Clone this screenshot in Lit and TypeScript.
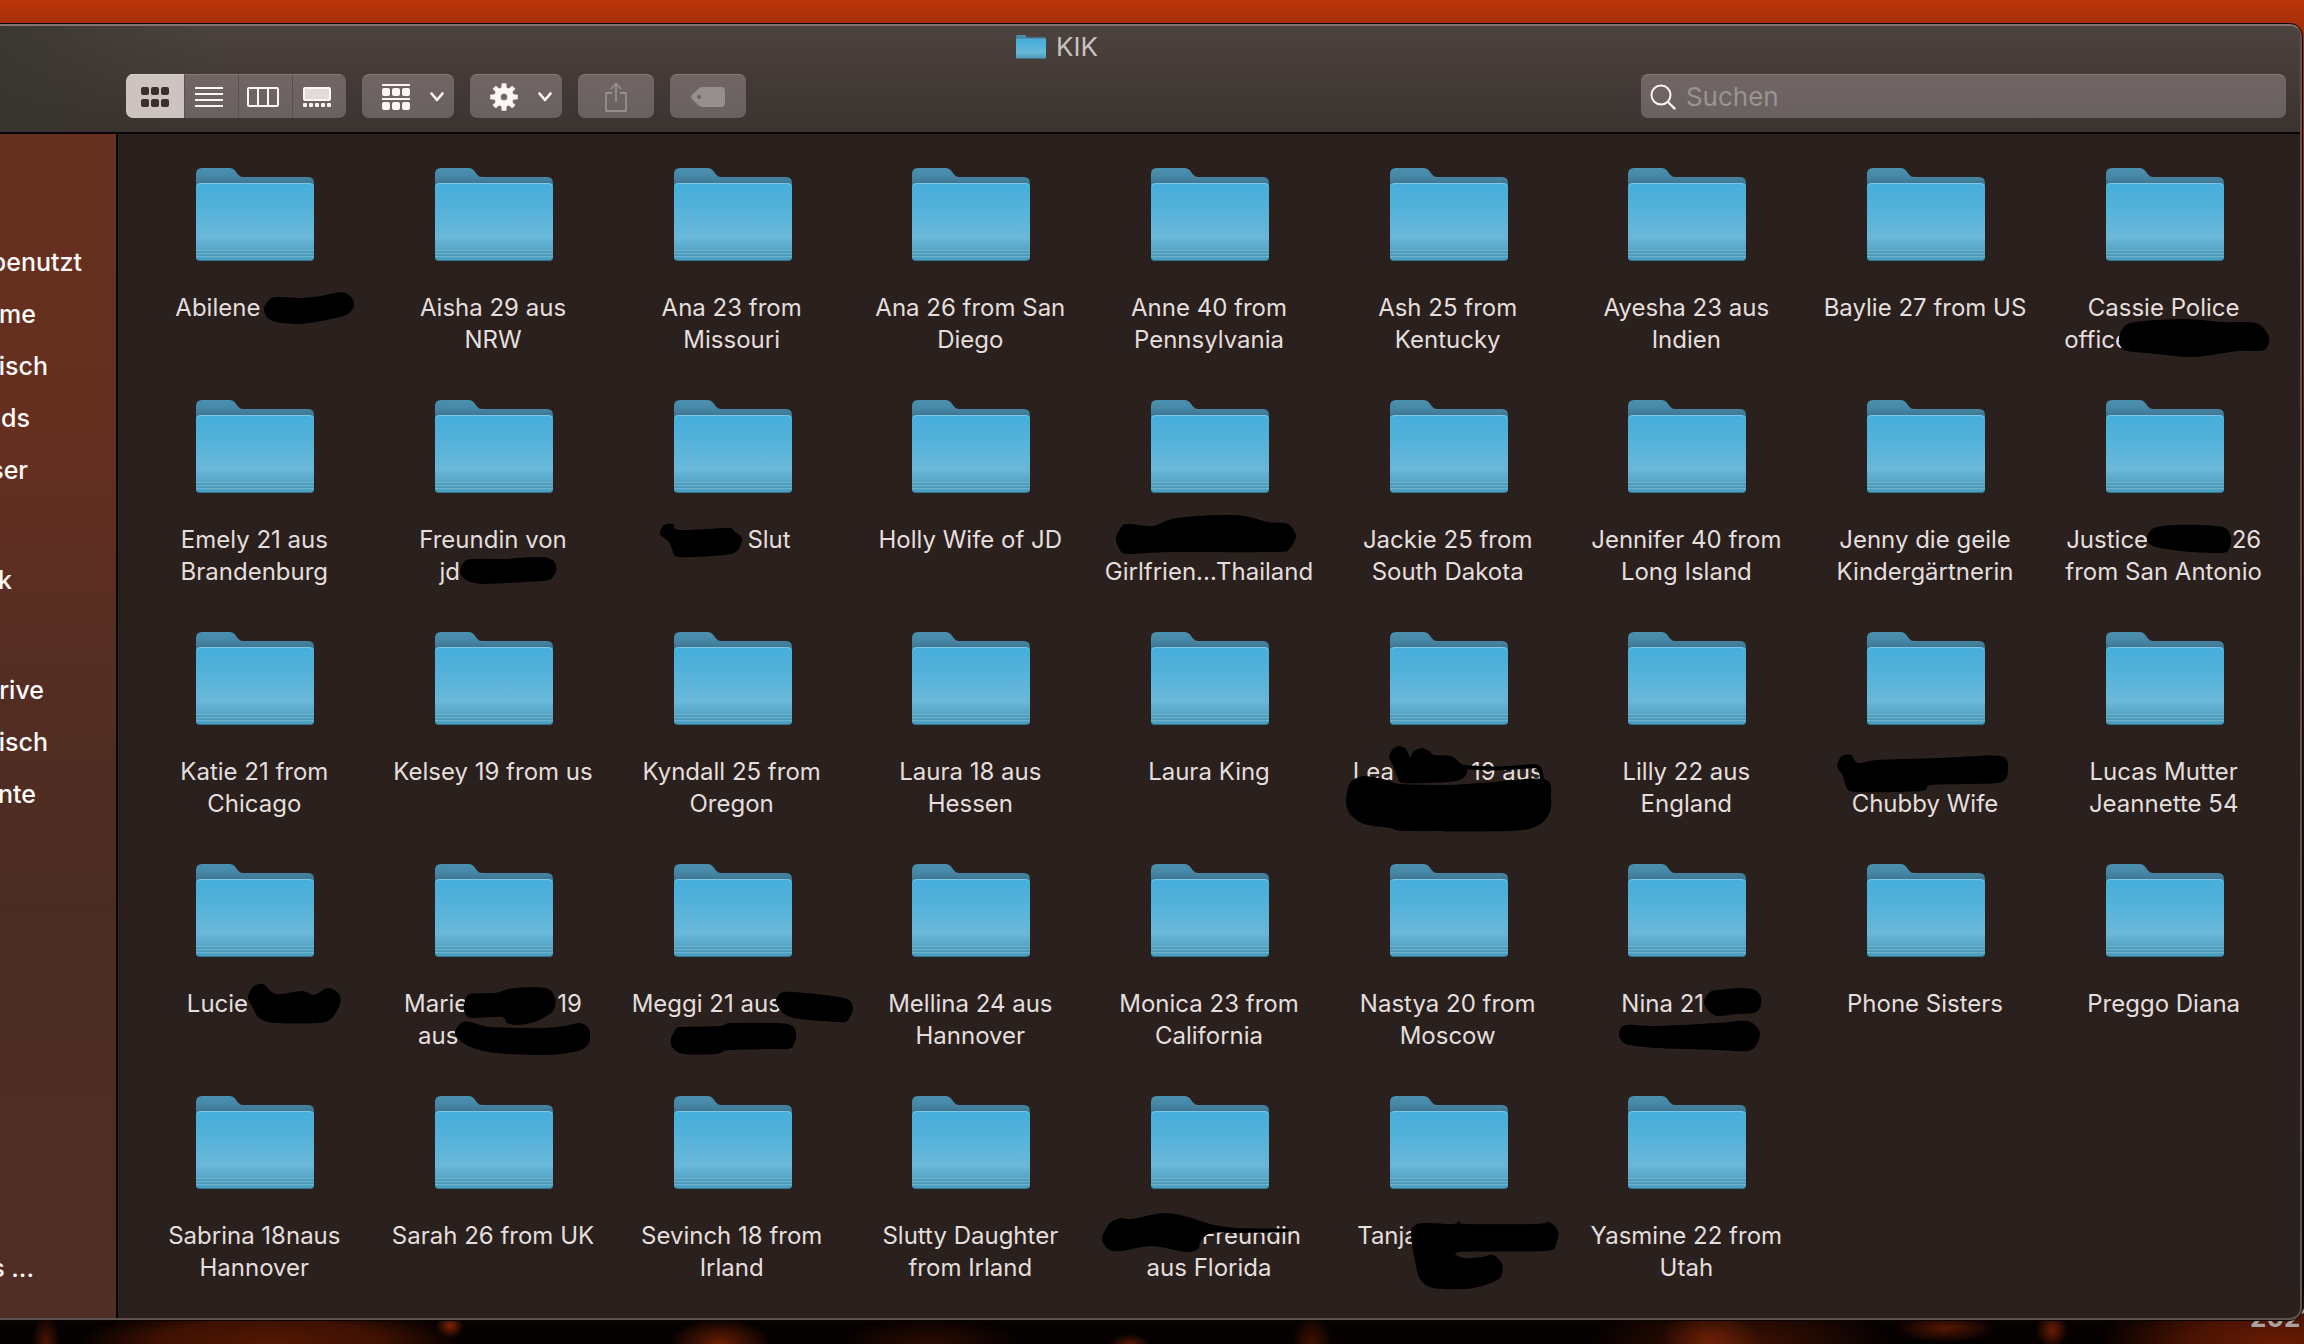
import { LitElement, html, svg, css, nothing } from "lit";
import { customElement, property } from "lit/decorators.js";

type Point = [number, number];
/** A plain line is a string; a line with covered words keeps its full width and pins the readable parts to its ends. */
type Line = string | { width: number; parts: string[] };
interface Folder {
  lines: Line[];
  marks?: string[];
  pen?: string;
}

const hidden: Line = { width: 0, parts: [] };
const covered = (width: number, ...parts: string[]): Line => ({ width, parts });

const folders: Folder[] = [
  {
    lines: [covered(158, "Abilene")],
    marks: ["129,16 135,7 143,5 166,6 186,4 206,0 216,5 219,14 211,23 186,29 163,32 141,30 132,25"],
  },
  { lines: ["Aisha 29 aus", "NRW"] },
  { lines: ["Ana 23 from", "Missouri"] },
  { lines: ["Ana 26 from San", "Diego"] },
  { lines: ["Anne 40 from", "Pennsylvania"] },
  { lines: ["Ash 25 from", "Kentucky"] },
  { lines: ["Ayesha 23 aus", "Indien"] },
  { lines: ["Baylie 27 from US"] },
  {
    lines: ["Cassie Police", covered(199, "office")],
    marks: ["74,46 81,33 99,29 140,27 176,30 211,31 224,45 219,58 193,59 148,65 103,61 79,58"],
  },
  { lines: ["Emely 21 aus", "Brandenburg"] },
  {
    lines: ["Freundin von", covered(107, "jd")],
    marks: ["86,46 90,38 98,35 130,35 160,33 174,34 181,39 182,47 177,55 168,57 150,58 110,60 94,57 88,52"],
  },
  {
    lines: [covered(118, "", "Slut")],
    marks: ["47,10 51,1 60,0 66,6 114,4 121,7 129,15 124,27 111,31 66,33 59,25 56,18"],
  },
  { lines: ["Holly Wife of JD"] },
  {
    lines: [hidden, "Girlfrien...Thailand"],
    marks: ["26,14 32,2 40,0 63,2 86,-6 129,-9 155,-8 178,-2 198,0 206,12 199,25 185,28 78,28 37,30 29,24"],
  },
  { lines: ["Jackie 25 from", "South Dakota"] },
  { lines: ["Jennifer 40 from", "Long Island"] },
  { lines: ["Jenny die geile", "Kindergärtnerin"] },
  {
    lines: [covered(195, "Justice", "26"), "from San Antonio"],
    marks: ["102,14 109,4 130,1 157,1 180,4 186,15 183,27 171,29 135,27 108,22"],
  },
  { lines: ["Katie 21 from", "Chicago"] },
  { lines: ["Kelsey 19 from us"] },
  { lines: ["Kyndall 25 from", "Oregon"] },
  { lines: ["Laura 18 aus", "Hessen"] },
  { lines: ["Laura King"] },
  {
    lines: [covered(190, "Lea", "19 aus"), hidden],
    marks: [
      "17,45 21,27 35,20 58,24 71,28 118,29 151,27 215,23 222,42 220,58 208,70 181,75 78,75 61,72 35,68 21,58",
      "60,1 64,-7 70,-10 77,-7 81,1 85,-5 93,-8 100,-5 105,-1 121,0 130,6 138,15 133,23 118,26 75,27 68,20 64,9",
    ],
    pen: "M126 10C148 13 178 13 204 10Q211 10 212 16L214 30",
  },
  { lines: ["Lilly 22 aus", "England"] },
  {
    lines: [hidden, "Chubby Wife"],
    marks: ["31,10 36,0 45,-1 52,7 72,4 135,2 194,0 202,12 196,26 162,28 124,29 115,35 50,36 40,30 37,20"],
  },
  { lines: ["Lucas Mutter", "Jeannette 54"] },
  {
    lines: [covered(135, "Lucie")],
    marks: ["113,10 118,-1 128,-4 141,6 167,3 179,7 193,0 204,6 205,16 197,30 184,35 140,35 124,30 118,20"],
  },
  {
    lines: [covered(178, "Marie", "19"), covered(150, "aus")],
    marks: [
      "90,16 96,6 121,5 140,0 172,0 181,10 179,23 163,33 144,37 133,35 128,29 98,30 91,25",
      "81,46 87,35 96,34 117,39 167,40 190,38 206,35 215,41 215,55 204,63 172,67 121,65 94,58",
    ],
  },
  {
    lines: [covered(200, "Meggi 21 aus"), hidden],
    marks: [
      "163,13 168,5 181,4 231,10 240,20 234,33 222,34 181,30 168,23",
      "58,51 64,40 71,39 107,38 119,35 174,36 183,46 178,60 158,61 116,62 103,66 71,66 60,60",
    ],
  },
  { lines: ["Mellina 24 aus", "Hannover"] },
  { lines: ["Monica 23 from", "California"] },
  { lines: ["Nastya 20 from", "Moscow"] },
  {
    lines: [covered(130, "Nina 21"), hidden],
    marks: [
      "137,14 142,5 150,2 175,0 188,2 194,9 193,20 186,25 170,26 150,28 141,22",
      "52,46 59,37 90,38 150,35 180,33 192,42 191,54 181,63 150,62 90,60 59,56",
    ],
  },
  { lines: ["Phone Sisters"] },
  { lines: ["Preggo Diana"] },
  { lines: ["Sabrina 18naus", "Hannover"] },
  { lines: ["Sarah 26 from UK"] },
  { lines: ["Sevinch 18 from", "Irland"] },
  { lines: ["Slutty Daughter", "from Irland"] },
  {
    lines: [covered(184, "", "Freundin"), "aus Florida"],
    marks: [
      "12,18 20,3 31,-2 42,-1 74,-7 98,-3 120,4 147,8 196,9 196,12 147,13 121,13 111,21 108,29 96,32 62,26 31,31 18,29",
    ],
  },
  {
    lines: [covered(181, "Tanja"), hidden],
    marks: [
      "82,14 86,5 99,3 124,4 131,1 137,4 207,4 220,2 229,11 227,24 216,31 131,32 135,38 153,37 164,35 173,44 171,58 153,66 135,69 104,68 91,59 86,41",
    ],
  },
  { lines: ["Yasmine 22 from", "Utah"] },
];

/** Sidebar entries; `end` is where the label stops, measured from the visible left edge. */
const sidebarGroups: { label: string; end: number }[][] = [
  [
    { label: "benutzt", end: 82 },
    { label: "me", end: 36 },
    { label: "isch", end: 48 },
    { label: "ds", end: 30 },
    { label: "ser", end: 28 },
  ],
  [{ label: "k", end: 12 }],
  [
    { label: "rive", end: 44 },
    { label: "isch", end: 48 },
    { label: "nte", end: 36 },
  ],
];

/** Closed smooth curve through a list of points. */
function smooth(list: string): string {
  const p = list.split(" ").map((s) => s.split(",").map(Number) as Point);
  const n = p.length;
  let d = `M${p[0][0]} ${p[0][1]}`;
  for (let i = 0; i < n; i++) {
    const a = p[(i + n - 1) % n];
    const b = p[i];
    const c = p[(i + 1) % n];
    const e = p[(i + 2) % n];
    const r = (v: number) => Math.round(v * 10) / 10;
    d += `C${r(b[0] + (c[0] - a[0]) / 7)} ${r(b[1] + (c[1] - a[1]) / 7)} ${r(c[0] - (e[0] - b[0]) / 7)} ${r(
      c[1] - (e[1] - b[1]) / 7,
    )} ${c[0]} ${c[1]}`;
  }
  return d + "Z";
}

const tiles = (y: number) =>
  [0, 10, 20].map((x) => svg`<rect x=${x} y=${y} width="8" height="8" rx="2" />`);

const chevron = html`<svg width="14" height="10" viewBox="0 0 14 10" aria-hidden="true">
  <path d="M1.5 1.5 7 8l5.500-6.500" fill="none" stroke="#fdf6f4" stroke-width="2.600" stroke-linecap="round" stroke-linejoin="round" />
</svg>`;

function gearPath(): string {
  const teeth = 8;
  const pts: string[] = [];
  for (let i = 0; i < teeth; i++) {
    const mid = (i * 2 * Math.PI) / teeth - Math.PI / 2;
    for (const [r, off] of [
      [9.6, -0.25],
      [13.8, -0.15],
      [13.8, 0.15],
      [9.6, 0.25],
    ]) {
      pts.push(`${(14 + r * Math.cos(mid + off)).toFixed(1)} ${(14 + r * Math.sin(mid + off)).toFixed(1)}`);
    }
  }
  return `M${pts.join("L")}ZM14 10.500a3.500 3.500 0 1 0 0 7a3.500 3.500 0 1 0 0-7Z`;
}

@customElement("folder-icon")
export class FolderIcon extends LitElement {
  static styles = css`
    :host {
      display: block;
    }
    .shape {
      display: block;
      width: 100%;
      height: auto;
    }
  `;
  render() {
    return html`<svg class="shape" viewBox="0 0 118 93" aria-hidden="true">
      <defs>
        <linearGradient id="back" x1="0" y1="0" x2="0" y2="1">
          <stop offset="0" stop-color="#4a90b0" />
          <stop offset="0.14" stop-color="#4688a6" />
          <stop offset="0.26" stop-color="#3f7590" />
        </linearGradient>
        <linearGradient id="front" x1="0" y1="0" x2="0" y2="1">
          <stop offset="0" stop-color="#45aedb" />
          <stop offset="0.35" stop-color="#55b2da" />
          <stop offset="0.7" stop-color="#69b8d8" />
          <stop offset="0.87" stop-color="#57a3c3" />
          <stop offset="1" stop-color="#4aa0c0" />
        </linearGradient>
      </defs>
      <path d="M0 6Q0 0 6 0H34Q37 0 39 2.500L42 6.500Q44 9 47 9H112Q118 9 118 15V60H0Z" fill="url(#back)" />
      <path d="M0 19Q0 15 4 15H114Q118 15 118 19V89Q118 92.500 115 92.500H3Q0 92.500 0 89Z" fill="url(#front)" />
      <path d="M1 18Q2 15.500 5 15.500H113Q116 15.500 117 18" fill="none" stroke="#7cc8e8" stroke-width="1" />
      <path d="M0 82.500H118M0 85.500H118M0 88.500H118" stroke="#7fc0da" stroke-opacity="0.6" stroke-width="1" />
      <path d="M0 84H118M0 87H118" stroke="#3f8aa8" stroke-opacity="0.600" stroke-width="1" />
      <path d="M1 91.500Q2 92.500 4 92.500H114Q116 92.500 117 91.500" fill="none" stroke="#2f7590" stroke-width="1" />
    </svg>`;
  }
}

@customElement("folder-item")
export class FolderItem extends LitElement {
  @property({ attribute: false }) folder!: Folder;

  static styles = css`
    :host {
      display: flex;
      flex-direction: column;
      align-items: center;
      gap: 31px;
    }
    .icon {
      width: 118px;
    }
    .label {
      position: relative;
      box-sizing: border-box;
      width: 100%;
      height: 64px;
      padding-right: 2px;
      display: flex;
      flex-direction: column;
      align-items: center;
      font-size: 24px;
      line-height: 32px;
      color: #e4dedc;
    }
    .line {
      height: 32px;
      display: flex;
      justify-content: space-between;
      white-space: nowrap;
    }
    .marks {
      position: absolute;
      top: 0;
      left: 50%;
      margin-left: -120px;
      width: 240px;
      height: 64px;
      overflow: visible;
    }
  `;

  render() {
    const { lines, marks, pen } = this.folder;
    return html`<folder-icon class="icon"></folder-icon>
      <div class="label">
        ${lines.map((line) =>
          typeof line === "string"
            ? html`<span class="line">${line}</span>`
            : html`<span class="line" style="width:${line.width}px">${line.parts.map((p) => html`<span>${p}</span>`)}</span>`,
        )}
        ${marks
          ? html`<svg class="marks" viewBox="0 0 240 64" aria-hidden="true">
              ${marks.map((m) => svg`<path d=${smooth(m)} fill="#000" />`)}
              ${pen ? svg`<path d=${pen} fill="none" stroke="#000" stroke-width="4" stroke-linecap="round" />` : nothing}
            </svg>`
          : nothing}
      </div>`;
  }
}

@customElement("app-root")
export class AppRoot extends LitElement {
  static styles = css`
    :host {
      display: block;
      position: relative;
      box-sizing: border-box;
      min-height: 100vh;
      padding: 24px 2px 24px 0;
      overflow: hidden;
      font-family: Inter, "Liberation Sans", sans-serif;
      background:
        radial-gradient(ellipse 14px 30px at 46px 100%, #4f1704, transparent),
        radial-gradient(ellipse 190px 40px at 270px 100%, #541803, #3e1102 60%, transparent),
        radial-gradient(ellipse 14px 12px at 450px calc(100% - 18px), #7c2406, transparent),
        radial-gradient(ellipse 50px 26px at 720px 100%, #6a1e05, transparent),
        radial-gradient(ellipse 90px 26px at 930px 100%, #2c0c02, transparent),
        radial-gradient(ellipse 20px 10px at 1130px 100%, #561904, transparent),
        radial-gradient(ellipse 20px 30px at 1312px 100%, #421303, transparent),
        radial-gradient(ellipse 50px 34px at 1710px 100%, #6e2107, transparent),
        radial-gradient(ellipse 150px 50px at 1740px 100%, #3f1203, transparent),
        radial-gradient(ellipse 50px 14px at 1945px calc(100% - 16px), #561703, transparent),
        radial-gradient(ellipse 16px 18px at 2052px calc(100% - 14px), #6c1e04, transparent),
        radial-gradient(ellipse 180px 60px at 2280px 100%, #6a1b04, #4a1302 50%, transparent),
        linear-gradient(#bb3409 0, #a8300c 24px, #a8300c 130px, #5a1a08 500px, #1a0805 900px, #080202 1300px, #060101);
    }
    .stamp {
      position: absolute;
      left: 2250px;
      bottom: 10px;
      font-size: 26px;
      line-height: 32px;
      font-weight: 700;
      color: #a9a4a2;
    }
    .window {
      position: relative;
      box-sizing: border-box;
      margin-left: -190px;
      min-height: calc(100vh - 48px);
      display: flex;
      flex-direction: column;
      border: 2px solid #5d5350;
      border-top-color: #84736f;
      border-radius: 12px;
      overflow: hidden;
      background: #2a201d;
      outline: 1px solid #0b0504;
    }
    .toolbar {
      display: flex;
      flex-direction: column;
      padding: 6px 14px 14px 314px;
      border-bottom: 2px solid #050303;
      background:
        linear-gradient(90deg, #35332eb0 188px, #35332e00 400px),
        linear-gradient(#4c423e, #3b3330);
    }
    .title {
      display: flex;
      align-items: center;
      justify-content: center;
      gap: 10px;
      height: 30px;
      margin: 0 0 12px;
      padding-right: 298px;
      font-size: 26px;
      line-height: 30px;
      font-weight: 400;
      color: #cac1bf;
    }
    .title-icon {
      width: 30px;
    }
    .tools {
      display: flex;
      gap: 16px;
    }
    .segments {
      display: flex;
      border-radius: 7px;
      overflow: hidden;
    }
    .button {
      box-sizing: border-box;
      height: 44px;
      margin: 0;
      padding: 0;
      border: 0;
      border-top: 1px solid #867c7a;
      border-radius: 7px;
      display: flex;
      align-items: center;
      justify-content: center;
      background: linear-gradient(#716664, #696060);
      color: #fdf6f4;
    }
    .segment {
      width: 54px;
      padding-right: 5px;
      border-radius: 0;
    }
    .segment + .segment {
      border-left: 1px solid #5b514f;
    }
    .segment.active {
      width: 58px;
      padding-right: 0;
      border-top-color: #ddd4d2;
      background: #cdc3c1;
      color: #3a302e;
    }
    .menu {
      width: 92px;
      justify-content: space-between;
      padding: 0 10px 0 20px;
    }
    .action {
      width: 76px;
      color: #978f8d;
    }
    .search {
      margin-left: auto;
      width: 28vw;
      height: 44px;
      box-sizing: border-box;
      display: flex;
      align-items: center;
      gap: 10px;
      padding: 0 12px 0 9px;
      border-top: 1px solid #867c7a;
      border-radius: 7px;
      background: linear-gradient(#716664, #696060);
    }
    .field {
      flex: 1;
      min-width: 0;
      border: 0;
      padding: 0;
      outline: 0;
      background: none;
      font: 26px/32px Inter, "Liberation Sans", sans-serif;
      color: #fdf6f4;
    }
    .field::placeholder {
      color: #9b9391;
      opacity: 1;
    }
    .body {
      flex: 1;
      display: flex;
    }
    .sidebar {
      flex: none;
      box-sizing: border-box;
      width: 306px;
      padding-top: 102px;
      padding-bottom: 24px;
      border-right: 2px solid #050303;
      display: flex;
      flex-direction: column;
      gap: 58px;
      background: linear-gradient(#67301f, #652f20 25%, #522d23 48%, #4b2c23 65%, #502e25);
    }
    .group {
      display: flex;
      flex-direction: column;
    }
    .last {
      margin-top: auto;
    }
    .entry {
      box-sizing: border-box;
      height: 52px;
      display: block;
      text-align: right;
      white-space: nowrap;
      font-size: 25px;
      line-height: 52px;
      font-weight: 500;
      color: #fffaf8;
      text-decoration: none;
    }
    .grid {
      flex: 1;
      margin: 0;
      padding: 34px 16px 32px 18px;
      list-style: none;
      display: grid;
      grid-template-columns: repeat(9, minmax(0, 1fr));
      align-content: start;
      row-gap: 44px;
    }
  `;

  private entry(label: string, end: number) {
    return html`<a class="entry" href="#" style="width:${end + 188}px">${label}</a>`;
  }

  render() {
    return html`
      <span class="stamp">2021</span>
      <main class="window">
        <header class="toolbar">
          <h1 class="title"><folder-icon class="title-icon"></folder-icon>KIK</h1>
          <div class="tools">
            <div class="segments">
              <button class="button segment active" aria-label="Symbole">
                <svg width="28" height="20" fill="currentColor">${tiles(0)}${tiles(12)}</svg>
              </button>
              <button class="button segment" aria-label="Liste">
                <svg width="28" height="20" fill="currentColor">
                  ${[0, 6, 12, 18].map((y) => svg`<rect y=${y} width="28" height="2" />`)}
                </svg>
              </button>
              <button class="button segment" aria-label="Spalten">
                <svg width="32" height="20" fill="none" stroke="currentColor" stroke-width="2">
                  <rect x="1" y="1" width="30" height="18" rx="1" />
                  <path d="M11 1V19M21 1V19" />
                </svg>
              </button>
              <button class="button segment" aria-label="Galerie">
                <svg width="28" height="20" fill="currentColor">
                  <rect x="1" y="1" width="26" height="12" rx="1" fill="#e3dbd9" stroke="currentColor" stroke-width="2" />
                  ${[0, 6, 12, 18, 24].map((x) => svg`<rect x=${x} y="16" width="4" height="4" rx="1" />`)}
                </svg>
              </button>
            </div>
            <button class="button menu" aria-label="Gruppieren">
              <svg width="28" height="26" fill="currentColor">
                <rect width="28" height="2" />${tiles(4)}
                <rect y="14" width="28" height="2" />${tiles(18)}
              </svg>
              ${chevron}
            </button>
            <button class="button menu" aria-label="Aktionen">
              <svg width="28" height="28" fill="currentColor"><path d=${gearPath()} fill-rule="evenodd" stroke="currentColor" stroke-width="0.500" stroke-linejoin="round" /></svg>
              ${chevron}
            </button>
            <button class="button action" aria-label="Teilen">
              <svg width="22" height="30" fill="none" stroke="currentColor" stroke-width="1.800">
                <path d="M7 11H1V29H21V11H15M11 20V1.500M6 7 11 1.500 16 7" />
              </svg>
            </button>
            <button class="button action" aria-label="Tags">
              <svg width="34" height="20" fill="currentColor">
                <path d="M12 0H30Q34 0 34 4V16Q34 20 30 20H12Q9 20 7 18L1 12Q-1 10 1 8L7 2Q9 0 12 0ZM8 8a2 2 0 1 0 0 4a2 2 0 1 0 0-4Z" fill-rule="evenodd" />
              </svg>
            </button>
            <label class="search">
              <svg width="26" height="26" fill="none" stroke="#fdf6f4" stroke-width="2" stroke-linecap="round" aria-hidden="true">
                <circle cx="11" cy="11" r="9.500" />
                <path d="M18 18 24.500 24.500" stroke-width="2.400" />
              </svg>
              <input class="field" type="text" placeholder="Suchen" aria-label="Suchen" />
            </label>
          </div>
        </header>
        <div class="body">
          <nav class="sidebar">
            ${sidebarGroups.map((g) => html`<div class="group">${g.map((e) => this.entry(e.label, e.end))}</div>`)}
            <div class="group last">${this.entry("s ...", 34)}</div>
          </nav>
          <ul class="grid">
            ${folders.map((f) => html`<li><folder-item .folder=${f}></folder-item></li>`)}
          </ul>
        </div>
      </main>
    `;
  }
}
